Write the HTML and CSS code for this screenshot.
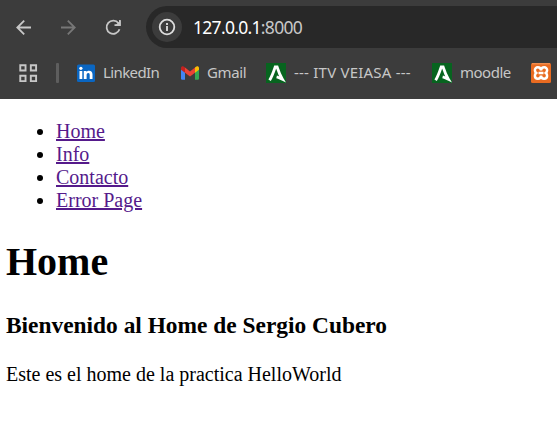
FILE: index.html
```html
<!DOCTYPE html>
<html lang="es">
<head>
<meta charset="utf-8">
<title>Home</title>
<link rel="stylesheet" href="styles.css">
</head>
<body>
<header class="browser">
  <div class="toolbar">
    <svg class="nav" viewBox="0 0 20 20"><path d="M17 10.5H3.5M10.2 3.6L3.3 10.5l6.9 6.9"/></svg>
    <svg class="nav nav-off" viewBox="0 0 20 20"><path d="M2 10.500h13.500M8.800 3.600l6.900 6.900-6.900 6.900"/></svg>
    <svg class="nav" viewBox="0 0 20 20"><path d="M15.500 12.300A6.600 6.600 0 1 1 14.500 6.300L16 7.600M15.900 3v5.200h-5.400"/><path class="solid" d="M16.500 3.500v5.300h-5.600z"/></svg>
    <div class="address">
      <span class="info"><svg viewBox="0 0 20 20"><circle cx="10" cy="10" r="7.3"/><path d="M10 9v5M10 6v2"/></svg></span>
      <span class="url"><b>127.0.0.1</b>:8000</span>
    </div>
  </div>
  <nav class="bookmarks">
    <svg class="apps" viewBox="0 0 18 18"><path d="M1.2 1.2h5v5h-5zM11.2 1.2h5v5h-5zM1.2 11.2h5v5h-5zM11.2 11.2h5v5h-5z"/></svg>
    <span class="divider"></span>
    <div class="bookmark linkedin">
      <svg class="icon" viewBox="0 0 20 20"><rect x="1" y="1.5" width="18" height="17.5" rx="1.5" fill="#0a66c2"/><circle cx="4.900" cy="5.300" r="1.600" fill="#fff"/><path d="M3.500 8h2.800v8H3.500zM7.800 8h2.700v1.100c.6-.9 1.400-1.300 2.500-1.300 2.400 0 3.500 1.400 3.500 3.800V16h-2.800v-4c0-1.200-.3-2-1.400-2s-1.700.8-1.700 2v4H7.800z" fill="#fff"/></svg>
      <span>LinkedIn</span>
    </div>
    <div class="bookmark gmail">
      <svg class="icon" viewBox="0 0 20 20"><path d="M1 5v10.600q0 1.200 1.200 1.200H5V8z" fill="#4285f4"/><path d="M19 5v10.600q0 1.200-1.200 1.200H15V8z" fill="#34a853"/><path d="M5 4.600l5 3.900 5-3.900v5.100l-5 3.800-5-3.800z" fill="#ea4335"/><path d="M1 6.700V5.200C1 3.100 3.200 2.900 4.400 4L5 4.500v5.200z" fill="#c5221f"/><path d="M19 6.700V5.200c0-2.100-2.200-2.300-3.400-1.200l-.6.500v5.200z" fill="#fbbc04"/></svg>
      <span>Gmail</span>
    </div>
    <div class="bookmark itv">
      <svg class="icon" viewBox="0 0 20 20"><path d="M0 0h20v20H0z" fill="#07641f"/><path class="mark" d="M3.600 17.200C6 13.500 7.700 8.500 9.200 4h1.900c1.500 4.700 3.200 8.900 5.300 12.300-1.800-.8-3.600-2-5.800-2.500"/></svg>
      <span>--- ITV VEIASA ---</span>
    </div>
    <div class="bookmark moodle">
      <svg class="icon" viewBox="0 0 20 20"><path d="M0 0h20v20H0z" fill="#07641f"/><path class="mark" d="M3.600 17.200C6 13.500 7.700 8.500 9.200 4h1.900c1.500 4.700 3.200 8.900 5.300 12.300-1.800-.8-3.600-2-5.800-2.500"/></svg>
      <span>moodle</span>
    </div>
    <svg class="icon" viewBox="0 0 20 20"><rect width="20" height="20" rx="1.500" fill="#e96b21"/><path d="M1 .8h18" stroke="#f49b61"/><path d="M10 7.400C9.600 3.200 3.700 3.500 3.900 7.200c0 1.100.4 1.900 1.300 2.800-1 .8-1.400 1.700-1.300 2.900.1 3.600 5.800 3.800 6.100-.3.300 4.100 6 3.900 6.100.3.100-1.200-.3-2.100-1.300-2.900.9-.9 1.300-1.700 1.300-2.800.2-3.700-5.700-4-6.100.2zM7.500 10h5" fill="none" stroke="#fff" stroke-width="2.500"/></svg>
  </nav>
</header>
<main>
  <ul>
    <li><a href="#">Home</a></li>
    <li><a href="#">Info</a></li>
    <li><a href="#">Contacto</a></li>
    <li><a href="#">Error Page</a></li>
  </ul>
  <h1>Home</h1>
  <h3>Bienvenido al Home de Sergio Cubero</h3>
  <p>Este es el home de la practica HelloWorld</p>
</main>
</body>
</html>
```
FILE: styles.css
```css
* { box-sizing: border-box; }
body {
  margin: 0;
  background: #fff;
  color: #000;
  font-family: "Liberation Serif", serif;
  font-size: 20px;
  line-height: 23px;
  overflow: hidden;
}
.browser {
  height: 99px;
  padding-top: 6px;
  background: #3c3c3c;
  font-family: "Noto Sans", sans-serif;
  white-space: nowrap;
  overflow: hidden;
}
.toolbar { display: flex; align-items: center; height: 42px; padding-left: 14px; }
.nav {
  flex: none;
  width: 20px;
  height: 20px;
  margin-right: 25px;
  fill: none;
  stroke: #c7c7c7;
  stroke-width: 1.8;
}
.nav-off { stroke: #777; }
.nav .solid { fill: #c7c7c7; stroke: none; }
.address {
  display: flex;
  align-items: center;
  flex: 1;
  height: 42px;
  margin-left: -3px;
  padding-left: 6px;
  border-radius: 21px 0 0 21px;
  background: #282828;
}
.info {
  display: flex;
  align-items: center;
  justify-content: center;
  width: 30px;
  height: 30px;
  border-radius: 50%;
  background: #3c3c3c;
}
.info svg { width: 20px; height: 20px; fill: none; stroke: #dedede; stroke-width: 1.8; }
.url { margin-left: 11px; color: #c7c7c7; font-size: 17.5px; letter-spacing: -0.7px; }
.url b { color: #fff; font-weight: 400; }
.bookmarks { display: flex; align-items: center; height: 50px; padding-left: 19px; }
.apps { flex: none; width: 19px; height: 19px; margin-top: 1px; fill: none; stroke: #c7c7c7; stroke-width: 1.8; }
.divider { flex: none; width: 3px; height: 20px; margin: 0 18px; border-radius: 1px; background: #5e5e5e; }
.icon { flex: none; display: block; width: 20px; height: 20px; }
.mark { fill: none; stroke: #fff; stroke-width: 2.8; }
.bookmark {
  display: flex;
  flex: none;
  align-items: center;
  gap: 8px;
  color: #c7c7c7;
  font-size: 15px;
}
.bookmark span { margin-top: -2px; }
.linkedin { width: 104px; margin-left: -1px; gap: 7px; letter-spacing: -0.6px; }
.gmail { width: 86px; gap: 7px; letter-spacing: -0.4px; }
.itv { width: 166px; letter-spacing: 0.22px; }
.moodle { width: 99px; letter-spacing: -0.5px; }
main { padding: 0 6px; }
ul { margin: 21px 0 0; padding-left: 50px; }
a { color: #551a8b; text-decoration: underline; }
h1 { margin: 27px 0 0; font-size: 40px; line-height: 46px; }
h3 { margin: 27px 0 0; font-size: 23.4px; line-height: 27px; }
p { margin: 24px 0 0; }
```
